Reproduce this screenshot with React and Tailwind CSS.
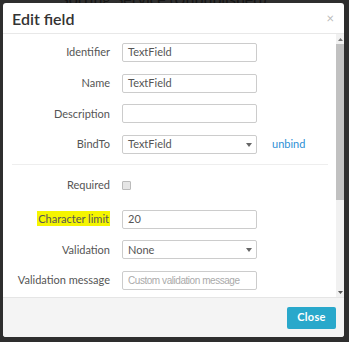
import React from 'react';

const font = { fontFamily: 'Lato, "Noto Sans", sans-serif' };

function Label({ children, highlight }) {
  return (
    <div className="w-[107px] shrink-0 text-right text-[11px] text-[#555]">
      {highlight ? <span className="bg-[#f5f500] px-[1px] py-[1px]">{children}</span> : children}
    </div>
  );
}

function TextInput({ value, placeholder }) {
  return (
    <div className="flex h-[19px] w-[135px] items-center overflow-hidden whitespace-nowrap rounded-[2px] border border-[#ccc] bg-white px-[5px] text-[11px] text-[#555]">
      {value ? (
        value
      ) : (
        <span className="font-['Liberation_Sans',Arial,sans-serif] text-[10px] tracking-[-0.45px] text-[#aaa]">{placeholder}</span>
      )}
    </div>
  );
}

function Select({ value }) {
  return (
    <div className="flex h-[19px] w-[135px] items-center justify-between rounded-[2px] border border-[#ccc] bg-white pl-[5px] pr-[4px] text-[11px] text-[#555]">
      <span>{value}</span>
      <svg width="6" height="4" viewBox="0 0 6 4"><path d="M0 0h6L3 4z" fill="#666" /></svg>
    </div>
  );
}

function Row({ label, highlight, children }) {
  return (
    <div className="flex h-[19px] items-center gap-[12px]">
      <Label highlight={highlight}>{label}</Label>
      {children}
    </div>
  );
}

export default function App() {
  return (
    <div className="relative h-[342px] w-[349px] overflow-hidden bg-[#2e2e2e]" style={font}>
      {/* page behind the overlay */}
      <div className="absolute left-[60px] top-[-13px] whitespace-nowrap text-[16px] text-[#151515]">
        Sorting Service (Unpublished)
      </div>

      {/* modal */}
      <div className="absolute left-[3px] top-[3px] flex h-[334px] w-[341px] flex-col overflow-hidden rounded-[3px] bg-white">
        {/* header */}
        <div className="flex h-[31px] shrink-0 items-center justify-between border-b border-[#e8e8e8] pl-[9px] pr-[10px]">
          <h1 className="mt-[2px] text-[16px] font-semibold text-[#333]">Edit field</h1>
          <span className="text-[13px] leading-none text-[#bbb]">×</span>
        </div>

        {/* body */}
        <div className="flex min-h-0 flex-1">
          <div className="flex-1 pt-[9px]">
            <div className="flex flex-col gap-[11.7px]">
              <Row label="Identifier"><TextInput value="TextField" /></Row>
              <Row label="Name"><TextInput value="TextField" /></Row>
              <Row label="Description"><TextInput /></Row>
              <Row label="BindTo">
                <Select value="TextField" />
                <span className="ml-[3px] text-[11px] text-[#2d8fd5]">unbind</span>
              </Row>
            </div>

            <div className="ml-[9px] mr-[8px] mt-[10px] border-t border-[#eee]" />

            <div className="mt-[11px] flex flex-col gap-[11.7px]">
              <Row label="Required">
                <div className="h-[9px] w-[9px] rounded-[1px] border border-[#bbb] bg-[#e6e6e6]" />
              </Row>
              <div className="mt-[3px]">
                <Row label="Character limit" highlight><TextInput value="20" /></Row>
              </div>
              <Row label="Validation"><Select value="None" /></Row>
              <Row label="Validation message"><TextInput placeholder="Custom validation message" /></Row>
            </div>
          </div>

          {/* scrollbar */}
          <div className="flex w-[8px] flex-col items-center bg-[#f1f1f1]">
            <div className="flex h-[10px] items-center justify-center">
              <svg width="5" height="3" viewBox="0 0 5 3"><path d="M0 3h5L2.5 0z" fill="#777" /></svg>
            </div>
            <div className="h-[156px] w-[8px] bg-[#c1c1c1]" />
            <div className="flex-1" />
            <div className="flex h-[10px] items-center justify-center">
              <svg width="5" height="3" viewBox="0 0 5 3"><path d="M0 0h5L2.5 3z" fill="#555" /></svg>
            </div>
          </div>
        </div>

        {/* footer */}
        <div className="flex h-[40px] shrink-0 items-center justify-end border-t border-[#e5e5e5] bg-[#f4f4f4] pr-[8px]">
          <button className="h-[22px] w-[49px] rounded-[2px] bg-[#29a8cb] text-[11px] font-bold tracking-[0.3px] text-white">
            Close
          </button>
        </div>
      </div>
    </div>
  );
}
